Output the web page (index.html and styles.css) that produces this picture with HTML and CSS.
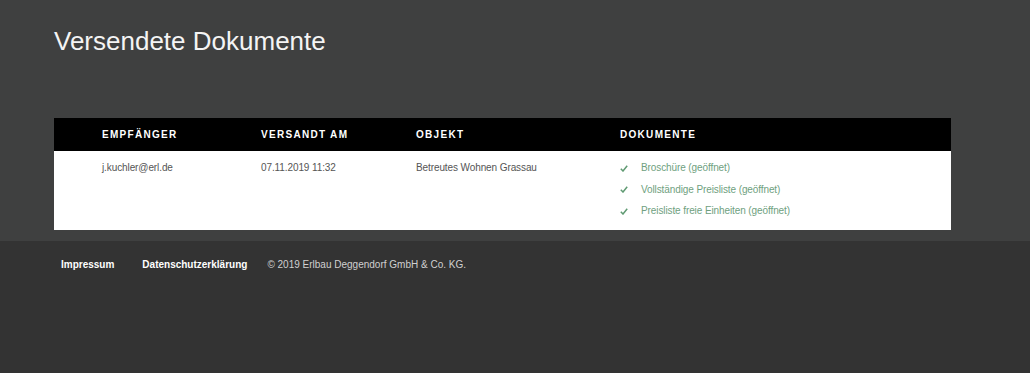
FILE: index.html
```
<!DOCTYPE html>
<html lang="de">
<head>
    <meta charset="UTF-8">
    <meta name="viewport" content="width=device-width, initial-scale=1.0">
    <title>Versendete Dokumente</title>
    <link rel="stylesheet" href="styles.css">
</head>
<body>
    <main id="content">
        <h1 class="title">Versendete Dokumente</h1>

        <table class="sent-table">
            <thead>
                <tr>
                    <th class="col-to">Empfänger</th>
                    <th class="col-date">Versandt am</th>
                    <th class="col-object">Objekt</th>
                    <th>Dokumente</th>
                </tr>
            </thead>
            <tbody>
                <tr>
                    <td>j.kuchler@erl.de</td>
                    <td>07.11.2019 11:32</td>
                    <td>Betreutes Wohnen Grassau</td>
                    <td>
                        <ul class="docs">
                            <li><svg class="check" viewBox="0 0 8 7"><path d="M0.8 3.8 L3 6 L7.2 0.8" /></svg>Broschüre (geöffnet)</li>
                            <li><svg class="check" viewBox="0 0 8 7"><path d="M0.8 3.8 L3 6 L7.2 0.8" /></svg>Vollständige Preisliste (geöffnet)</li>
                            <li><svg class="check" viewBox="0 0 8 7"><path d="M0.8 3.8 L3 6 L7.2 0.8" /></svg>Preisliste freie Einheiten (geöffnet)</li>
                        </ul>
                    </td>
                </tr>
            </tbody>
        </table>
    </main>

    <footer id="footer">
        <a href="#">Impressum</a>
        <a href="#">Datenschutzerklärung</a>
        <span class="copy">© 2019 Erlbau Deggendorf GmbH &amp; Co. KG.</span>
    </footer>
</body>
</html>
```

FILE: styles.css
```
body {
    font-family: "Liberation Sans", Arial, sans-serif;
    background-color: #333333;
    color: #555;
    margin: 0;
    padding: 0;
}
#content {
    background-color: #3f4040;
    padding: 27px 79px 11px 54px;
}
.title {
    margin: 0 0 63px 0;
    font-size: 26px;
    font-weight: normal;
    line-height: 28px;
    color: #f4f4f4;
}
.sent-table {
    width: 897px;
    border-collapse: collapse;
    background-color: #fff;
    font-size: 10px;
    table-layout: fixed;
}
.sent-table th {
    background-color: #000;
    color: #fff;
    text-align: left;
    text-transform: uppercase;
    letter-spacing: 1.3px;
    font-size: 10px;
    font-weight: bold;
    height: 33px;
    padding: 0 0 0 48px;
}
.col-to {
    width: 111px;
}
.col-date {
    width: 107px;
}
.col-object {
    width: 156px;
}
.sent-table td {
    vertical-align: top;
    padding: 10px 0 12px 48px;
    line-height: 14px;
    color: #555;
    letter-spacing: -0.1px;
}
.docs {
    list-style: none;
    margin: 0;
    padding: 0;
    color: #6f9f80;
}
.docs li {
    display: flex;
    align-items: center;
    height: 14px;
    margin-bottom: 7.5px;
}
.docs li:last-child {
    margin-bottom: 0;
}
.check {
    width: 8px;
    height: 7px;
    margin-right: 13px;
    fill: none;
    stroke: #5f9a72;
    stroke-width: 1.5;
}
#footer {
    display: flex;
    align-items: flex-start;
    gap: 28px;
    padding: 17px 0 0 61px;
    height: 115px;
    font-size: 10px;
    line-height: 14px;
}
#footer a {
    color: #fff;
    font-weight: bold;
    text-decoration: none;
}
#footer .copy {
    color: #d0d0d0;
    margin-left: -8px;
}
```
